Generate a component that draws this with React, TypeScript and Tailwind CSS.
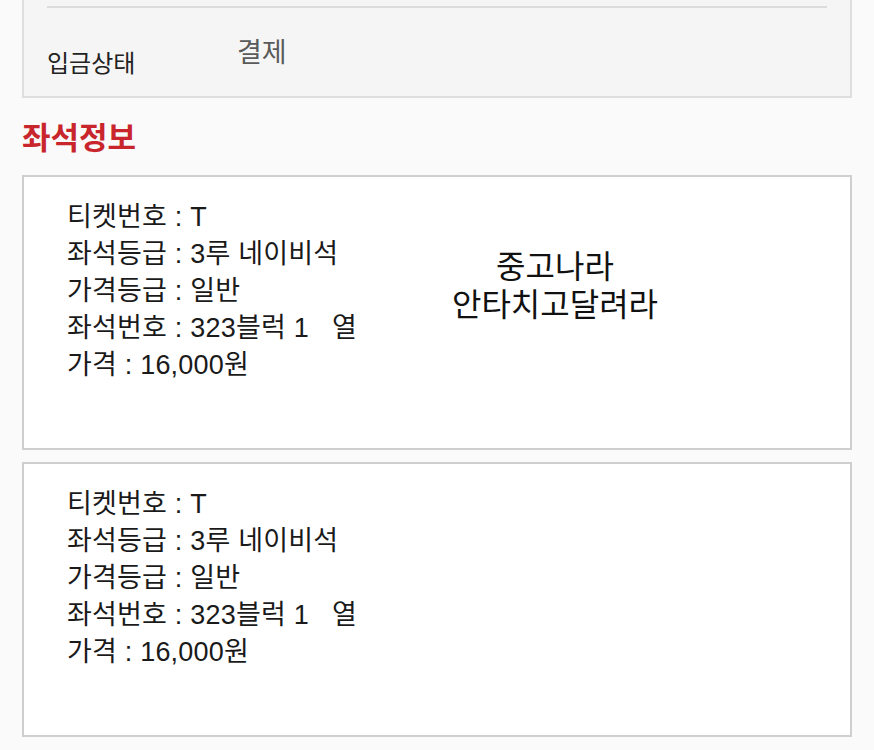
import React from 'react'

const FONT = { fontFamily: '"Liberation Sans", "Noto Sans CJK KR", sans-serif' }

type Ticket = {
  ticketNo: string
  seatGrade: string
  priceGrade: string
  seatNo: string
  price: string
}

const tickets: Ticket[] = [
  { ticketNo: 'T', seatGrade: '3루 네이비석', priceGrade: '일반', seatNo: '323블럭 1   열', price: '16,000원' },
  { ticketNo: 'T', seatGrade: '3루 네이비석', priceGrade: '일반', seatNo: '323블럭 1   열', price: '16,000원' },
]

function TicketCard({ t, note }: { t: Ticket; note?: string[] }) {
  return (
    <div className="flex h-[275px] border-2 border-[#cfcfcf] bg-white">
      <div className="w-[336px] shrink-0 pl-[43px] pt-[22px] text-[27px] leading-[37px] tracking-[0.2px] text-[#1a1a1a] whitespace-pre">
        <div>티켓번호 : {t.ticketNo}</div>
        <div>좌석등급 : {t.seatGrade}</div>
        <div>가격등급 : {t.priceGrade}</div>
        <div>좌석번호 : {t.seatNo}</div>
        <div>가격 : {t.price}</div>
      </div>
      {note && (
        <div className="flex-1 pr-[100px] pt-[71px] text-center text-[32px] leading-[38px] text-[#111]">
          {note.map((line, i) => (
            <div key={i}>{line}</div>
          ))}
        </div>
      )}
    </div>
  )
}

export default function App() {
  return (
    <div className="min-h-[750px] bg-[#fafafa] px-[22px] pb-[12px]" style={FONT}>
      <div className="h-[98px] border-x-2 border-b-2 border-[#dedede] bg-[#f5f5f5]">
        <div className="mx-[23px] h-[8px] border-b-2 border-[#dcdcdc]" />
        <div className="flex pl-[23px] pt-[28px]">
          <div className="w-[190px] pt-[13px] text-[24px] leading-[30px] text-[#222]">입금상태</div>
          <div className="text-[27px] leading-[34px] text-[#5a5a5a]">결제</div>
        </div>
      </div>

      <h2 className="pt-[21px] pb-[17px] text-[31px] leading-[39px] font-bold text-[#c8262c]">
        좌석정보
      </h2>

      <div className="flex flex-col gap-[12px]">
        <TicketCard t={tickets[0]} note={['중고나라', '안타치고달려라']} />
        <TicketCard t={tickets[1]} />
      </div>
    </div>
  )
}
